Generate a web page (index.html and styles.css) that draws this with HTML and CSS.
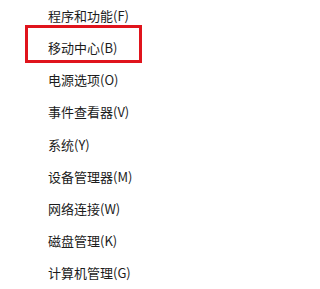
FILE: index.html
```html
<!DOCTYPE html>
<html lang="zh-CN">
<head>
<meta charset="utf-8">
<link rel="stylesheet" href="styles.css">
</head>
<body>
<ul class="menu">
  <li class="item">程序和功能(F)</li>
  <li class="item marked">移动中心(B)</li>
  <li class="item">电源选项(O)</li>
  <li class="item">事件查看器(V)</li>
  <li class="item">系统(Y)</li>
  <li class="item">设备管理器(M)</li>
  <li class="item">网络连接(W)</li>
  <li class="item">磁盘管理(K)</li>
  <li class="item">计算机管理(G)</li>
</ul>
</body>
</html>
```
FILE: styles.css
```css
html, body {
  margin: 0;
  padding: 0;
  background: #ffffff;
}
body {
  width: 245px;
  height: 289px;
  overflow: hidden;
  font-family: "Noto Sans CJK SC", "Noto Sans", sans-serif;
  font-size: 13px;
  color: #1c1c1c;
}
.menu {
  list-style: none;
  margin: 0;
  padding: 0 0 0 48px;
  display: flex;
  flex-direction: column;
}
.item {
  height: 32.15px;
  line-height: 32.15px;
  white-space: nowrap;
  position: relative;
}
.marked::after {
  content: "";
  position: absolute;
  left: -23px;
  top: -7px;
  width: 111px;
  height: 32px;
  border: 3px solid #e0141c;
}
```
